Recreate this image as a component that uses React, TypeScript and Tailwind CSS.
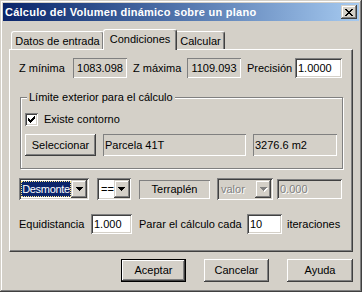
import React from 'react';

const sunken = 'shadow-[inset_1px_1px_0_#808080,inset_-1px_-1px_0_#fff,inset_2px_2px_0_#404040,inset_-2px_-2px_0_#d4d0c8]';
const raised = 'shadow-[inset_-1px_-1px_0_#404040,inset_1px_1px_0_#fff,inset_-2px_-2px_0_#808080,inset_2px_2px_0_#d4d0c8]';
const dropRaised = 'shadow-[inset_-1px_-1px_0_#404040,inset_1px_1px_0_#d4d0c8,inset_-2px_-2px_0_#808080,inset_2px_2px_0_#fff]';
const staticEdge = 'shadow-[inset_1px_1px_0_#808080,inset_-1px_-1px_0_#fff]';
const disabledText = 'text-[#808080] [text-shadow:1px_1px_0_#fff]';

function Arrow({ disabled }: { disabled?: boolean }) {
  return (
    <svg width="8" height="5" viewBox="0 0 8 5" className="block" shapeRendering="crispEdges">
      {disabled && <path d="M1 1h7v1H1z M2 2h5v1H2z M3 3h3v1H3z M4 4h1v1H4z" fill="#fff" />}
      <path d="M0 0h7v1H0z M1 1h5v1H1z M2 2h3v1H2z M3 3h1v1H3z" fill={disabled ? '#808080' : '#000'} />
    </svg>
  );
}

function DropBtn({ disabled }: { disabled?: boolean }) {
  return (
    <div className={`w-[16px] h-full shrink-0 bg-[#d4d0c8] ${dropRaised} flex items-center justify-center pl-[1px]`}>
      <Arrow disabled={disabled} />
    </div>
  );
}

function Button({ label, def, className = '' }: { label: string; def?: boolean; className?: string }) {
  if (def) {
    return (
      <div className={`border border-black ${className}`}>
        <div className={`h-full w-full ${raised} flex items-center justify-center`}>{label}</div>
      </div>
    );
  }
  return <div className={`${raised} flex items-center justify-center ${className}`}>{label}</div>;
}

function CheckBox() {
  return (
    <div className={`w-[13px] h-[13px] bg-white ${sunken} relative`}>
      <svg width="7" height="7" viewBox="0 0 7 7" className="absolute left-[3px] top-[3px]" shapeRendering="crispEdges">
        <path
          d="M6 0h1v1H6z M5 1h2v1H5z M0 2h1v1H0z M4 2h3v1H4z M0 3h2v1H0z M3 3h3v1H3z M0 4h5v1H0z M1 5h3v1H1z M2 6h1v1H2z"
          fill="#000"
        />
      </svg>
    </div>
  );
}

export default function App() {
  return (
    <div className="w-[362px] h-[292px] bg-[#d4d0c8] p-[3px] shadow-[inset_-1px_-1px_0_#404040,inset_1px_1px_0_#d4d0c8,inset_-2px_-2px_0_#808080,inset_2px_2px_0_#fff] font-['Liberation_Sans',Arial,sans-serif] text-[11px] text-black leading-none select-none">
      {/* Title bar */}
      <div className="h-[18px] bg-linear-to-r from-[#0a246a] to-[#a6caf0] flex items-center justify-between pl-[2px]">
        <span className="text-white font-bold text-[11px] tracking-[0.25px]">Cálculo del Volumen dinámico sobre un plano</span>
        <div className={`w-[16px] h-[14px] mr-[2px] bg-[#d4d0c8] ${dropRaised} flex items-center justify-center`}>
          <svg width="8" height="7" viewBox="0 0 8 7" shapeRendering="crispEdges">
            <path
              d="M0 0h2v1H0z M6 0h2v1H6z M1 1h2v1H1z M5 1h2v1H5z M2 2h4v1H2z M3 3h2v1H3z M2 4h4v1H2z M1 5h2v1H1z M5 5h2v1H5z M0 6h2v1H0z M6 6h2v1H6z"
              fill="#000"
            />
          </svg>
        </div>
      </div>

      <div className="px-[6px]">
        {/* Tabs */}
        <div className="flex items-end h-[20px] mt-[8px] pl-[2px]">
          <div className="w-[93px] h-[18px] border-l border-t border-white border-r border-r-[#404040] rounded-t-[3px] shadow-[inset_-1px_0_0_#808080] flex items-center justify-center pt-[1px]">
            Datos de entrada
          </div>
          <div className="relative z-10 -mb-[1px] -ml-[1px] w-[74px] h-[21px] bg-[#d4d0c8] border-l border-t border-white border-r border-r-[#404040] rounded-t-[3px] shadow-[inset_-1px_0_0_#808080] flex items-center justify-center pb-[2px]">
            Condiciones
          </div>
          <div className="w-[48px] h-[18px] border-t border-white border-r border-r-[#404040] rounded-tr-[3px] shadow-[inset_-1px_0_0_#808080] flex items-center justify-center pt-[1px]">
            Calcular
          </div>
        </div>

        {/* Panel */}
        <div className="h-[203px] border-l border-t border-white border-r border-b border-r-[#404040] border-b-[#404040] shadow-[inset_-1px_-1px_0_#808080] flex flex-col pl-[9px] pt-[8px]">
          {/* Row 1 */}
          <div className="flex items-center h-[20px]">
            <span className="w-[54px]">Z mínima</span>
            <div className={`w-[54px] h-[20px] ${staticEdge} flex items-center justify-center`}>1083.098</div>
            <span className="w-[54px] ml-[6px]">Z máxima</span>
            <div className={`w-[54px] h-[20px] ${staticEdge} flex items-center justify-center`}>1109.093</div>
            <span className="w-[48px] ml-[6px]">Precisión</span>
            <div className={`w-[47px] h-[20px] bg-white ${sunken} flex items-center pl-[3px]`}>1.0000</div>
          </div>

          {/* Group box */}
          <div className="relative ml-[1px] mt-[19px] w-[323px] h-[72px] border border-[#808080] shadow-[inset_1px_1px_0_#fff,1px_1px_0_#fff] pl-[4px] pt-[15px]">
            <span className="absolute -top-[6px] left-[6px] bg-[#d4d0c8] px-[2px]">Límite exterior para el cálculo</span>
            <div className="flex items-center h-[13px]">
              <CheckBox />
              <span className="ml-[6px]">Existe contorno</span>
            </div>
            <div className="flex items-center h-[22px] mt-[8px]">
              <Button label="Seleccionar" className="w-[71px] h-[22px]" />
              <div className={`ml-[7px] w-[143px] h-[22px] ${staticEdge} flex items-center pl-[2px]`}>Parcela 41T</div>
              <div className={`ml-[7px] w-[84px] h-[22px] ${staticEdge} flex items-center pl-[2px]`}>3276.6 m2</div>
            </div>
          </div>

          {/* Row 3 */}
          <div className="flex items-center h-[22px] mt-[9px]">
            <div className={`w-[70px] h-[22px] bg-white ${sunken} p-[2px] flex`}>
              <div className="flex-1 min-w-0 flex items-center">
                <span className="h-[16px] w-full bg-[#0a246a] text-white outline-1 outline-dotted outline-offset-[-1px] outline-[#ffe88a] flex items-center justify-center whitespace-nowrap tracking-[-0.3px]">
                  Desmonte
                </span>
              </div>
              <DropBtn />
            </div>
            <div className={`ml-[8px] w-[34px] h-[22px] bg-white ${sunken} p-[2px] flex`}>
              <div className="flex-1 flex items-center pl-[2px]">==</div>
              <DropBtn />
            </div>
            <div className={`ml-[8px] w-[71px] h-[19px] ${staticEdge} flex items-center justify-center`}>Terraplén</div>
            <div className={`ml-[7px] w-[56px] h-[22px] bg-[#d4d0c8] ${sunken} p-[2px] flex`}>
              <div className={`flex-1 flex items-center pl-[2px] ${disabledText}`}>valor</div>
              <DropBtn disabled />
            </div>
            <div className={`ml-[4px] w-[65px] h-[20px] bg-[#d4d0c8] ${sunken} flex items-center pl-[3px] ${disabledText}`}>0.000</div>
          </div>

          {/* Row 4 */}
          <div className="flex items-center h-[20px] mt-[14px]">
            <span className="w-[72px]">Equidistancia</span>
            <div className={`w-[41px] h-[20px] bg-white ${sunken} flex items-center pl-[3px]`}>1.000</div>
            <span className="w-[108px] ml-[7px]">Parar el cálculo cada</span>
            <div className={`w-[35px] h-[20px] bg-white ${sunken} flex items-center pl-[3px]`}>10</div>
            <span className="ml-[5px]">iteraciones</span>
          </div>
        </div>

        {/* Buttons */}
        <div className="flex justify-end gap-[18px] mt-[7px]">
          <Button label="Aceptar" def className="w-[65px] h-[23px]" />
          <Button label="Cancelar" className="w-[65px] h-[23px]" />
          <Button label="Ayuda" className="w-[66px] h-[23px]" />
        </div>
      </div>
    </div>
  );
}
